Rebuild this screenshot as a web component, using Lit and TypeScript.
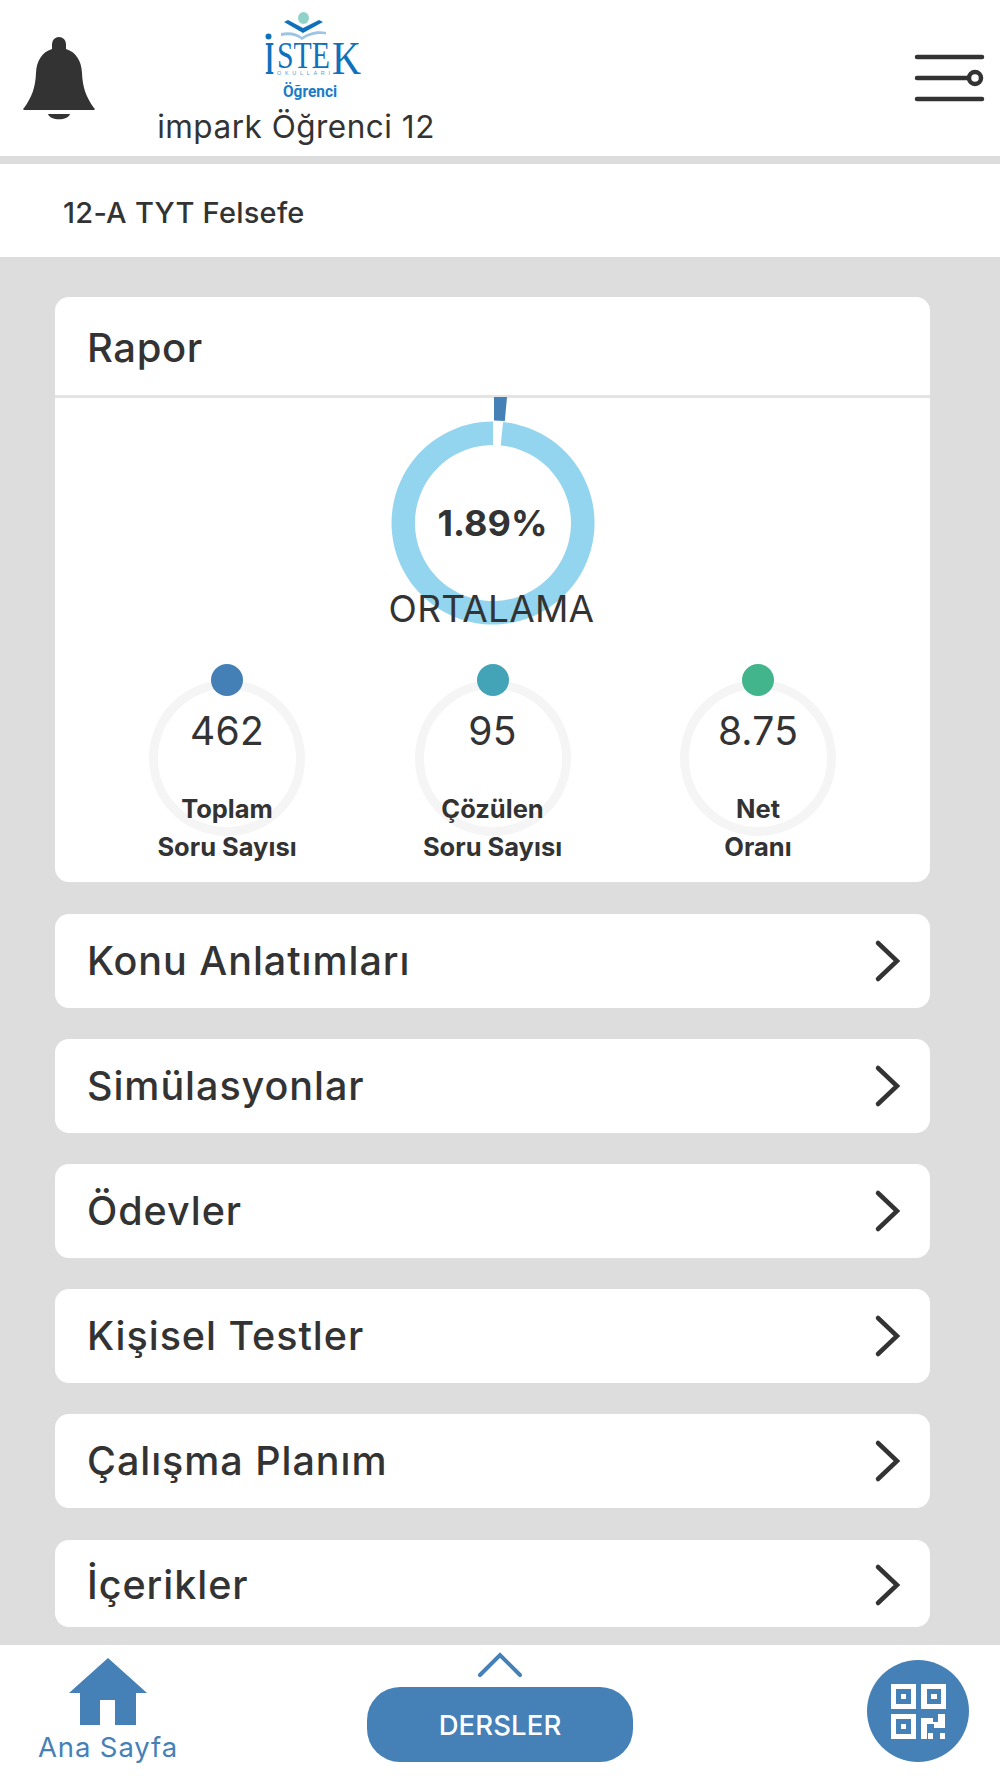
import { LitElement, html, css } from "lit";
import { customElement } from "lit/decorators.js";

const pt = (cx: number, cy: number, r: number, deg: number) => {
  const a = (deg * Math.PI) / 180;
  return `${(cx + r * Math.sin(a)).toFixed(2)} ${(cy - r * Math.cos(a)).toFixed(2)}`;
};
const ringPath = (cx: number, cy: number, ro: number, ri: number, from: number, to: number) =>
  `M${pt(cx, cy, ro, from)} A${ro} ${ro} 0 1 1 ${pt(cx, cy, ro, to)} L${pt(cx, cy, ri, to)} A${ri} ${ri} 0 1 0 ${pt(cx, cy, ri, from)} Z`;

const stats = [
  { value: "462", a: "Toplam", b: "Soru Sayısı", color: "#447fb6" },
  { value: "95", a: "Çözülen", b: "Soru Sayısı", color: "#43a3b7" },
  { value: "8.75", a: "Net", b: "Oranı", color: "#43b58d" },
];
const rows = ["Konu Anlatımları", "Simülasyonlar", "Ödevler", "Kişisel Testler", "Çalışma Planım", "İçerikler"];

@customElement("app-root")
export class AppRoot extends LitElement {
  static styles = css`
    :host {
      display: flex;
      flex-direction: column;
      width: 1000px;
      height: 1778px;
      overflow: hidden;
      background: #fff;
      color: #333;
      font-family: Inter, "Noto Sans", sans-serif;
    }
    .header {
      flex: none;
      display: flex;
      align-items: flex-start;
      box-sizing: border-box;
      border-bottom: 8px solid #ddd;
      height: 164px;
    }
    .bell { width: 72px; height: 86px; margin: 35px 0 0 23px; flex: none; }
    .who { display: flex; flex-direction: column; align-items: center; margin: 11px 0 0 62px; width: 278px; }
    .logo { width: 100px; height: 90px; margin-left: 30px; display: block; flex: none; overflow: visible; }
    .name { font-size: 31.5px; line-height: 40px; margin-top: 6px; white-space: nowrap; letter-spacing: 0.5px; }
    .menu { width: 72px; height: 56px; margin: 50px 14px 0 auto; flex: none; }
    .sub {
      height: 93px;
      flex: none;
      display: flex;
      align-items: center;
      padding: 3px 0 0 63px;
      box-sizing: border-box;
      font-size: 29px;
      font-weight: 500;
      letter-spacing: 0.25px;
    }
    .main {
      flex: 1;
      min-height: 0;
      overflow: hidden;
      background: #ddd;
      padding: 40px 70px 0 55px;
      display: flex;
      flex-direction: column;
      gap: 31px;
    }
    .card { background: #fff; border-radius: 14px; flex: none; height: 585px; display: flex; flex-direction: column; margin-bottom: 1px; }
    .card-head {
      height: 101px;
      box-sizing: border-box;
      flex: none;
      border-bottom: 3px solid #e4e4e4;
      display: flex;
      align-items: center;
      padding: 2px 0 0 32px;
      font-size: 40px;
      font-weight: 500;
      letter-spacing: 0.6px;
    }
    .ring { display: block; width: 204px; height: 228px; align-self: center; flex: none; }
    .ring-wrap { position: relative; align-self: center; display: flex; flex: none; margin-top: -1px; }
    .pct {
      position: absolute;
      left: 0;
      right: 0;
      top: 102px;
      height: 48px;
      line-height: 48px;
      text-align: center;
      font-size: 36px;
      font-weight: 700;
      letter-spacing: 0;
    }
    .avg {
      margin-top: -38px;
      height: 44px;
      line-height: 44px;
      text-align: center;
      font-size: 37px;
      letter-spacing: 0.25px;
      position: relative;
      margin-left: -2px;
    }
    .stats { display: grid; grid-template-columns: repeat(3, 265.5px); justify-content: center; margin-top: 49px; }
    .stat { position: relative; display: flex; flex-direction: column; align-items: center; }
    .circle {
      position: absolute;
      top: 0;
      left: 50%;
      margin-left: -78px;
      width: 156px;
      height: 156px;
      box-sizing: border-box;
      border: 9px solid #f5f5f5;
      border-radius: 50%;
    }
    .dot { position: absolute; top: -16px; left: 50%; margin-left: -16px; width: 32px; height: 32px; border-radius: 50%; }
    .value { position: relative; margin-top: 27px; font-size: 39px; line-height: 48px; letter-spacing: 0.2px; }
    .label { position: relative; margin-top: 35px; font-size: 25.5px; line-height: 38px; font-weight: 700; text-align: center; white-space: nowrap; }
    .row {
      flex: none;
      height: 94px;
      box-sizing: border-box;
      background: #fff;
      border-radius: 14px;
      display: flex;
      align-items: center;
      justify-content: space-between;
      padding: 0 28px 0 32px;
      font-size: 39.5px;
      font-weight: 500;
      letter-spacing: 0.95px;
    }
    .row:last-child { height: 87px; margin-top: 1px; padding-top: 3px; }
    .chev { width: 28px; height: 44px; flex: none; }
    .footer {
      height: 133px;
      flex: none;
      display: grid;
      grid-template-columns: 216px 1fr 216px;
      background: #fff;
      color: #4581b7;
    }
    .home { display: flex; flex-direction: column; align-items: center; padding-top: 13px; }
    .home svg { width: 80px; height: 70px; display: block; }
    .home span { font-size: 27.5px; line-height: 36px; margin-top: 1px; letter-spacing: 0.9px; white-space: nowrap; }
    .center { display: flex; flex-direction: column; align-items: center; }
    .up { width: 46px; height: 26px; margin-top: 6px; display: block; }
    .btn {
      margin-top: 10px;
      width: 266px;
      height: 75px;
      border-radius: 33px;
      background: #4581b7;
      color: #fff;
      display: flex;
      align-items: center;
      justify-content: center;
      font-size: 27.5px;
      font-weight: 500;
      letter-spacing: 0.1px;
    }
    .qr {
      width: 102px;
      height: 102px;
      border-radius: 50%;
      background: #4581b7;
      margin: 15px 31px 0 auto;
      display: flex;
      align-items: center;
      justify-content: center;
    }
    .qr svg { width: 55px; height: 55px; display: block; }
  `;

  render() {
    return html`
      <div class="header">
        <svg class="bell" viewBox="0 0 72 86" aria-hidden="true">
          <path fill="#333" d="M29 14 V9 a7 7 0 0 1 14 0 V14 C53 17 58.500 26 59 38 C59.500 52 63 62 71 73 a1 1 0 0 1 -0.500 2 H1.500 a1 1 0 0 1 -0.500 -2 C9 62 12.500 52 13 38 C13.500 26 19 17 29 14 Z"/>
          <path fill="#333" d="M25 79 H47 C45 86 27 86 25 79 Z"/>
        </svg>
        <div class="who">
          <svg class="logo" viewBox="0 0 100 90">
            <ellipse cx="42.500" cy="7" rx="5.500" ry="6" fill="#8fd3c8"/>
            <path d="M23 11 L27 9 L42 17 L58 9 L62 11 L42 22 Z" fill="#0f71bc"/>
            <path d="M20 22 C29 20 36 22 41 26 C47 22 55 19 65 21 L65 23.500 C55 22 47 25 41 29 C36 25 29 23 20 25 Z" fill="#9cc4e4"/>
            <circle cx="7.500" cy="25.500" r="3" fill="#0f71bc"/>
            <text x="4" y="63" font-family="Liberation Serif, serif" font-weight="700" font-size="47" fill="#0f71bc" textLength="9" lengthAdjust="spacingAndGlyphs">I</text>
            <text x="16" y="57" font-family="Liberation Serif, serif" font-size="38" fill="#0f71bc" textLength="53" lengthAdjust="spacingAndGlyphs">STE</text>
            <text x="71" y="63" font-family="Liberation Serif, serif" font-size="47" fill="#0f71bc" textLength="29" lengthAdjust="spacingAndGlyphs">K</text>
            <text x="16" y="64" font-family="Liberation Sans, sans-serif" font-size="5.500" fill="#5b9ad0" textLength="53">OKULLARI</text>
            <text x="22" y="86" font-family="Roboto, sans-serif" font-weight="700" font-size="16.500" fill="#1a7cc6" textLength="54" lengthAdjust="spacingAndGlyphs">Öğrenci</text>
          </svg>
          <div class="name">impark Öğrenci 12</div>
        </div>
        <svg class="menu" viewBox="0 0 72 56" fill="none" stroke="#333" stroke-width="4.500" stroke-linecap="round" aria-hidden="true">
          <path d="M3 7 H68"/>
          <path d="M3 28 H54"/>
          <circle cx="61" cy="28" r="6"/>
          <path d="M3 49 H68"/>
        </svg>
      </div>
      <div class="sub">12-A TYT Felsefe</div>
      <div class="main">
        <section class="card">
          <div class="card-head">Rapor</div>
          <div class="ring-wrap">
            <svg class="ring" viewBox="390 397 204 228" aria-hidden="true">
              <path fill="#93d5ef" d=${ringPath(492, 523, 101.5, 78, 5.7, 360)}/>
              <path fill="#4581b7" d="M493 397 H506 L503.800 421 L493 420.500 Z"/>
            </svg>
            <div class="pct">1.89%</div>
          </div>
          <div class="avg">ORTALAMA</div>
          <div class="stats">
            ${stats.map(
              (s) => html`
                <div class="stat">
                  <div class="circle"></div>
                  <div class="dot" style="background:${s.color}"></div>
                  <div class="value">${s.value}</div>
                  <div class="label">${s.a}<br />${s.b}</div>
                </div>
              `
            )}
          </div>
        </section>
        ${rows.map(
          (r) => html`
            <div class="row">
              <span>${r}</span>
              <svg class="chev" viewBox="0 0 28 44" fill="none" stroke="#333" stroke-width="4.500" stroke-linecap="round" stroke-linejoin="miter" aria-hidden="true">
                <path d="M4 4 L23 22 L4 40"/>
              </svg>
            </div>
          `
        )}
      </div>
      <div class="footer">
        <div class="home">
          <svg viewBox="0 0 80 70" aria-hidden="true">
            <path fill="#4581b7" d="M40 0 L79 35 H68 V67 H47 V42 H32 V67 H12 V35 H1 Z"/>
          </svg>
          <span>Ana Sayfa</span>
        </div>
        <div class="center">
          <svg class="up" viewBox="0 0 46 26" fill="none" stroke="#4581b7" stroke-width="4" stroke-linecap="round" aria-hidden="true">
            <path d="M3 24 L23 4 L43 24"/>
          </svg>
          <div class="btn">DERSLER</div>
        </div>
        <div>
          <div class="qr">
            <svg viewBox="0 0 55 55" aria-hidden="true">
              <path fill="#fff" fill-rule="evenodd" d="M0 0H25V25H0Z M5 5V20H20V5Z M10 10H15V15H10Z M30 0H55V25H30Z M36 5V20H50V5Z M40 10H46V15H40Z M0 30H25V55H0Z M5 35V50H20V35Z M10 40H15V45H10Z"/>
              <path fill="#fff" d="M30 34H42V38H47V30H54V44H43V40H36V55H30Z M37 49H42V55H37Z M49 49H54V55H49Z"/>
            </svg>
          </div>
        </div>
      </div>
    `;
  }
}
